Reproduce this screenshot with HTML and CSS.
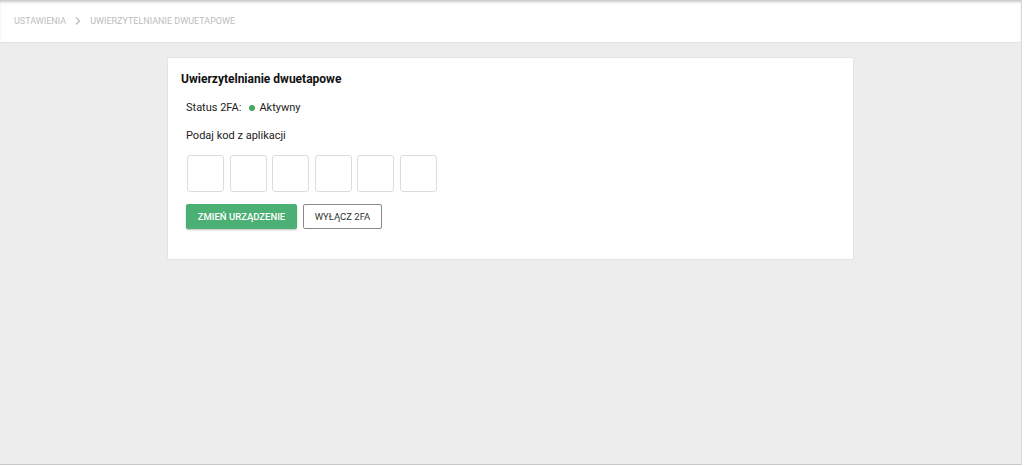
FILE: index.html
```html
<!DOCTYPE html>
<html lang="pl">
<head>
<meta charset="utf-8">
<title>Uwierzytelnianie dwuetapowe</title>
<link rel="stylesheet" href="styles.css">
</head>
<body>
<div class="app">
  <header class="topbar">
    <nav class="crumbs">
      <span class="crumb">Ustawienia</span>
      <svg class="crumb-sep" width="8" height="10" viewBox="0 0 8 10"><path d="M2 1.5 L5.5 5 L2 8.5" fill="none" stroke="#bdbdbd" stroke-width="1.4"/></svg>
      <span class="crumb">Uwierzytelnianie dwuetapowe</span>
    </nav>
  </header>
  <main class="content">
    <section class="card">
      <h1 class="card-title">Uwierzytelnianie dwuetapowe</h1>
      <div class="status">Status 2FA: <span class="dot"></span>Aktywny</div>
      <div class="label">Podaj kod z aplikacji</div>
      <div class="code">
        <input class="digit" maxlength="1">
        <input class="digit" maxlength="1">
        <input class="digit" maxlength="1">
        <input class="digit" maxlength="1">
        <input class="digit" maxlength="1">
        <input class="digit" maxlength="1">
      </div>
      <div class="actions">
        <button class="btn btn-primary">Zmień urządzenie</button>
        <button class="btn btn-outline">Wyłącz 2FA</button>
      </div>
    </section>
  </main>
</div>
</body>
</html>
```

FILE: styles.css
```css
* { box-sizing: border-box; }
html, body { margin: 0; padding: 0; height: 100%; }
body {
  font-family: Roboto, "Liberation Sans", sans-serif;
  color: #222;
  background: #fff;
}
.app {
  width: 1022px;
  height: 465px;
  background: #ededed;
  border-right: 1px solid #d8d8d8;
  border-bottom: 1px solid #c8c8c8;
  display: flex;
  flex-direction: column;
}
.topbar {
  height: 43px;
  background: #fff;
  border-bottom: 1px solid #e2e2e2;
  box-shadow: inset 0 3px 3px -1px rgba(0,0,0,0.22);
  display: flex;
  align-items: center;
  padding: 0 0 0 14px;
  flex-shrink: 0;
}
.crumbs {
  display: flex;
  align-items: center;
  gap: 7px;
  margin-top: -1px;
}
.crumb {
  font-size: 9px;
  text-transform: uppercase;
  color: #bdbdbd;
}
.crumb-sep { margin: 0 1px 0 1px; }
.content {
  padding: 14px 0 0 167px;
}
.card {
  width: 687px;
  height: 203px;
  background: #fff;
  border: 1px solid #e4e4e4;
  border-radius: 2px;
  padding: 14px 0 0 13px;
}
.card-title {
  margin: 0;
  font-size: 12px;
  font-weight: 700;
  color: #111;
  line-height: 14px;
}
.status {
  margin: 15px 0 0 5px;
  font-size: 11px;
  line-height: 13px;
  display: flex;
  align-items: center;
}
.dot {
  display: inline-block;
  width: 6px;
  height: 6px;
  border-radius: 50%;
  background: #43a95c;
  margin: 0 4px 0 8px;
}
.label {
  margin: 15px 0 0 5px;
  font-size: 11px;
  line-height: 13px;
}
.code {
  display: flex;
  gap: 5.5px;
  margin: 13px 0 0 6px;
}
.digit {
  width: 37px;
  height: 37px;
  border: 1px solid #dcdcdc;
  border-radius: 3px;
  background: #fff;
  padding: 0;
  outline: none;
}
.actions {
  display: flex;
  gap: 6px;
  margin: 12px 0 0 5px;
}
.btn {
  height: 25px;
  font-family: inherit;
  font-size: 9.5px;
  font-weight: 500;
  text-transform: uppercase;
  border-radius: 2px;
  padding: 0;
  cursor: pointer;
}
.btn-primary {
  width: 111px;
  background: #4caf74;
  color: #fff;
  border: none;
  box-shadow: 0 1px 2px rgba(0,0,0,0.25);
}
.btn-outline {
  width: 79px;
  background: #fff;
  color: #333;
  border: 1px solid #8a8a8a;
  font-weight: 400;
}
```
